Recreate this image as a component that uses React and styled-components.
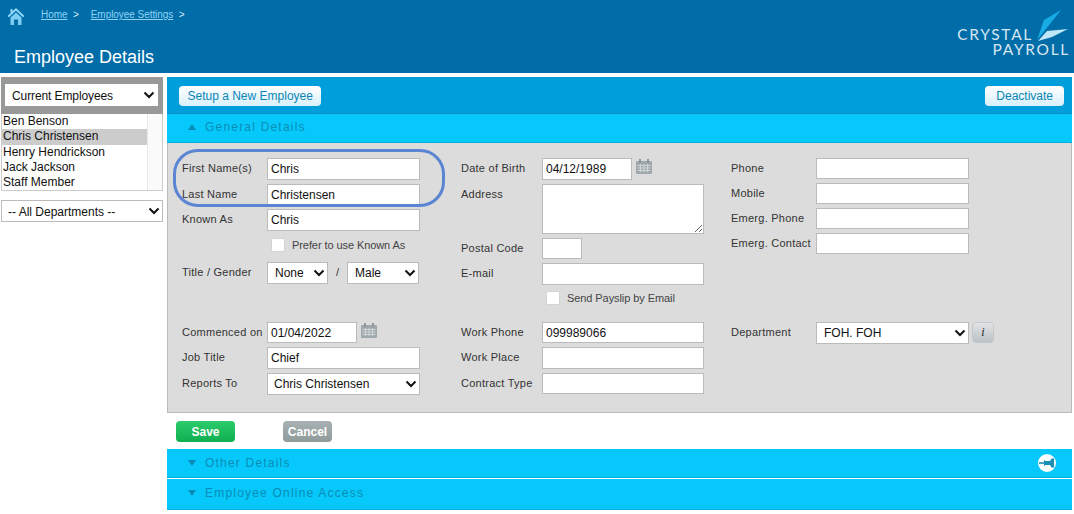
import styled, { createGlobalStyle } from 'styled-components'

const GlobalStyle = createGlobalStyle`
  html, body {
    margin: 0;
    padding: 0;
    background: #fff;
    font-family: "Liberation Sans", Arial, sans-serif;
  }
  * {
    box-sizing: border-box;
  }
`

const Page = styled.div`
  width: 1074px;
  height: 514px;
  overflow: hidden;
`

const Header = styled.header`
  display: flex;
  justify-content: space-between;
  height: 73px;
  background: #006ca8;
`

const HeaderLeft = styled.div`
  display: flex;
  flex-direction: column;
  justify-content: space-between;
  padding: 7px 0 5px 7px;
`

const Crumbs = styled.nav`
  display: flex;
  align-items: flex-start;
  height: 20px;
`

const Crumb = styled.span`
  margin-left: ${props => props.first ? '16px' : '12px'};
  padding-top: 2px;
  font-size: 10px;
  line-height: 12px;
  letter-spacing: -0.05px;
  color: #d5ecf8;
  a {
    color: #8ed3f6;
    text-decoration: underline;
  }
`

const PageTitle = styled.h1`
  margin: 0 0 0 7px;
  font-size: 18px;
  line-height: 22px;
  font-weight: normal;
  color: #fff;
`

const Logo = styled.div`
  position: relative;
  width: 118px;
  margin-right: 4px;
  padding-top: 27px;
  text-align: right;
  font-family: "Lato", "Liberation Sans", sans-serif;
  font-weight: 400;
  font-size: 15.5px;
  line-height: 14.5px;
  letter-spacing: 1.7px;
  color: #d6e6f0;
`

const LogoLine = styled.div`
  padding-right: ${props => props.pad || 0}px;
`

const LogoWing = styled.svg`
  position: absolute;
  top: 10px;
  right: 1px;
`

const Body = styled.div`
  display: flex;
  gap: 4px;
  padding: 4px 2px 0 1px;
`

const Sidebar = styled.aside`
  width: 162px;
  flex-shrink: 0;
`

const SidebarTop = styled.div`
  height: 37px;
  padding: 7px 4px 0;
  background: #999;
`

const EmployeeList = styled.div`
  display: flex;
  height: 77px;
  border: 1px solid #ccc;
  border-top: 0;
`

const ListRows = styled.ul`
  flex: 1;
  margin: 0;
  padding: 0;
  list-style: none;
`

const ListRow = styled.li`
  height: ${props => props.selected ? 16 : 15}px;
  padding: 0 1px;
  font-size: 12px;
  line-height: 15px;
  color: #111;
  background: ${props => props.selected ? '#ccc' : 'transparent'};
`

const ListScroll = styled.div`
  width: 15px;
  background: #fafafa;
  border-left: 1px solid #e8e8e8;
`

const DeptFilter = styled.div`
  margin-top: 9px;
`

const Main = styled.main`
  flex: 1;
  min-width: 0;
`

const Toolbar = styled.div`
  display: flex;
  justify-content: space-between;
  height: 37px;
  padding: 9px 8px 0 12px;
  background: #009fdb;
  border-bottom: 1px solid #0a8fc4;
`

const LightButton = styled.button`
  height: 20px;
  padding: 0 ${props => props.pad || 8.5}px;
  border: 0;
  border-radius: 4px;
  background: linear-gradient(#fff, #d8f0fb);
  color: #0a86b5;
  font-family: inherit;
  font-size: 12px;
`

const SectionBar = styled.div`
  position: relative;
  display: flex;
  align-items: center;
  gap: 9px;
  height: ${props => props.height || 29}px;
  padding-left: 21px;
  padding-bottom: ${props => props.lift || 0}px;
  margin-top: ${props => props.gap || 0}px;
  background: #06c8fb;
  border-bottom: 1px solid #08aee0;
  color: #0a8db5;
  font-size: 12px;
  letter-spacing: 1.2px;
`

const Arrow = styled.i`
  width: 0;
  height: 0;
  border-left: 4.5px solid transparent;
  border-right: 4.5px solid transparent;
  ${props => props.up
    ? 'border-bottom: 6px solid #0a8db5;'
    : 'border-top: 6px solid #0a8db5;'}
`

const PinBadge = styled.span`
  position: absolute;
  top: 5px;
  right: 16px;
  display: flex;
  align-items: center;
  justify-content: center;
  width: 18px;
  height: 18px;
  border-radius: 50%;
  background: #fff;
`

const FormPanel = styled.div`
  position: relative;
  height: 270px;
  padding: 15px 0 0 14px;
  background: #dcdcdc;
  border: 1px solid #bbb;
  border-top: 0;
`

const FormGrid = styled.div`
  display: grid;
  grid-template-columns: 279px 270px 1fr;
`

const LowerGrid = styled(FormGrid)`
  margin-top: ${props => props.gap}px;
`

const Column = styled.div`
  display: flex;
  flex-direction: column;
  gap: 4px;
`

const Field = styled.div`
  display: flex;
  align-items: flex-start;
  margin-top: ${props => props.top || 0}px;
`

const Label = styled.label`
  width: ${props => props.width || 85}px;
  flex-shrink: 0;
  padding-top: 3px;
  font-size: 11px;
  line-height: 14px;
  letter-spacing: 0.25px;
  color: #333;
`

const TextInput = styled.input`
  display: block;
  width: ${props => props.width || 153}px;
  height: ${props => props.height || 21.5}px;
  padding: 1px 3px 0;
  border: 1px solid #bbb;
  border-radius: 0;
  background: #fff;
  color: #111;
  font-family: inherit;
  font-size: 12px;
  outline: none;
`

const TextArea = styled.textarea`
  display: block;
  width: 162px;
  height: 50px;
  padding: 2px 3px;
  border: 1px solid #bbb;
  border-radius: 0;
  background: #fff;
  font-family: inherit;
  font-size: 12px;
  outline: none;
`

const SelectBox = styled.div`
  position: relative;
  width: ${props => props.width || 153}px;
`

const Select = styled.select`
  display: block;
  width: 100%;
  height: ${props => props.height || 22}px;
  padding: 1px 0 0 ${props => props.pad || 6}px;
  border: ${props => props.flat ? '0' : '1px solid #bbb'};
  border-radius: 0;
  background: #fff;
  color: #111;
  font-family: inherit;
  font-size: 12px;
  letter-spacing: ${props => props.flat ? '-0.1px' : '0'};
  appearance: none;
  outline: none;
`

const Chevron = styled.svg`
  position: absolute;
  top: 50%;
  right: 3px;
  margin-top: -4px;
  pointer-events: none;
`

const CheckRow = styled.div`
  display: flex;
  align-items: center;
  gap: 7px;
  height: 15px;
  margin: ${props => props.margin};
  font-size: 11px;
  letter-spacing: -0.08px;
  color: #444;
`

const CheckBox = styled.span`
  width: 14px;
  height: 14px;
  background: #fff;
  border: 1px solid #d4d4d4;
  border-radius: 2px;
`

const Slash = styled.span`
  width: 19px;
  padding-top: 4px;
  text-align: center;
  font-size: 11px;
  color: #333;
`

const CalendarIcon = styled.svg`
  margin: 1px 0 0 4px;
`

const InfoButton = styled.button`
  width: 22px;
  height: 21px;
  margin-left: 3px;
  padding: 0;
  border: 1px solid #c4c8cb;
  border-radius: 4px;
  background: linear-gradient(#e2e4e6, #bcc2c6);
  color: #222;
  font-family: "Liberation Serif", serif;
  font-style: italic;
  font-size: 12px;
`

const Highlight = styled.div`
  position: absolute;
  top: 6px;
  left: 5px;
  width: 272px;
  height: 58px;
  border: 3px solid #5b84d2;
  border-radius: 25px;
  pointer-events: none;
`

const Actions = styled.div`
  display: flex;
  align-items: flex-start;
  gap: 48px;
  height: 36px;
  padding: 8px 0 0 9px;
`

const ActionButton = styled.button`
  width: ${props => props.width}px;
  height: 21px;
  padding: 0;
  border: 0;
  border-radius: 4px;
  background: ${props => props.save
    ? 'linear-gradient(#2ccb6c, #0fae50)'
    : 'linear-gradient(#a9b2b2, #8f9a9a)'};
  color: #fff;
  font-family: inherit;
  font-size: 12px;
  font-weight: bold;
`

function Caret() {
  return (
    <Chevron width="12" height="8" viewBox="0 0 12 8">
      <path d="M1.5 1.5 L6 6 L10.5 1.5" fill="none" stroke="#111" strokeWidth="2" />
    </Chevron>
  )
}

function Dropdown({ value, width, height, pad, flat }) {
  return (
    <SelectBox width={width}>
      <Select defaultValue={value} height={height} pad={pad} flat={flat}>
        <option>{value}</option>
      </Select>
      <Caret />
    </SelectBox>
  )
}

function Calendar() {
  return (
    <CalendarIcon width="16" height="15" viewBox="0 0 16 15">
      <rect x="0" y="2" width="16" height="13" rx="1" fill="#9fa9ac" />
      <rect x="3" y="0" width="2" height="4" fill="#8f999c" />
      <rect x="11" y="0" width="2" height="4" fill="#8f999c" />
      <path d="M1.5 6.5h13M1.5 9h13M1.5 11.5h13M4.5 5v8M8 5v8M11.5 5v8" stroke="#d0d6d7" strokeWidth="1" />
    </CalendarIcon>
  )
}

function App() {
  const employees = ['Ben Benson', 'Chris Christensen', 'Henry Hendrickson', 'Jack Jackson', 'Staff Member']

  return (
    <Page>
      <GlobalStyle />
      <Header>
        <HeaderLeft>
          <Crumbs>
            <svg width="18" height="18" viewBox="0 0 18 18">
              <path d="M9 1 L17.5 9 L16 10.2 L9 3.8 L2 10.2 L0.5 9 L3.5 6.2 V2 H5.5 V4.3 Z" fill="#8fd6f8" />
              <path d="M3.5 10.5 L9 5.5 L14.5 10.5 V18 H11 V12.5 H7 V18 H3.5 Z" fill="#7fcdf5" />
            </svg>
            <Crumb first><a href="#home">Home</a> &nbsp;&gt;</Crumb>
            <Crumb><a href="#settings">Employee Settings</a> &nbsp;&gt;</Crumb>
          </Crumbs>
          <PageTitle>Employee Details</PageTitle>
        </HeaderLeft>
        <Logo>
          <LogoLine pad={37}>CRYSTAL</LogoLine>
          <LogoLine>PAYROLL</LogoLine>
          <LogoWing width="32" height="32" viewBox="0 0 32 32">
            <path d="M24 0 L7 10 L0 30 L9 19 Z" fill="#18ace6" />
            <path d="M31 19 L10 21 L1 31 L15 27 Z" fill="#bfe6f7" />
          </LogoWing>
        </Logo>
      </Header>

      <Body>
        <Sidebar>
          <SidebarTop>
            <Dropdown value="Current Employees" width={153} height={22} pad={7} flat />
          </SidebarTop>
          <EmployeeList>
            <ListRows>
              {employees.map((name, i) => (
                <ListRow key={name} selected={i === 1}>{name}</ListRow>
              ))}
            </ListRows>
            <ListScroll />
          </EmployeeList>
          <DeptFilter>
            <Dropdown value="-- All Departments --" width={162} height={22} pad={6} />
          </DeptFilter>
        </Sidebar>

        <Main>
          <Toolbar>
            <LightButton>Setup a New Employee</LightButton>
            <LightButton pad={11}>Deactivate</LightButton>
          </Toolbar>
          <SectionBar lift={2}>
            <Arrow up />
            General Details
          </SectionBar>
          <FormPanel>
            <Highlight />
            <FormGrid>
              <Column>
                <Field><Label>First Name(s)</Label><TextInput defaultValue="Chris" /></Field>
                <Field><Label>Last Name</Label><TextInput defaultValue="Christensen" /></Field>
                <Field><Label>Known As</Label><TextInput defaultValue="Chris" /></Field>
                <CheckRow margin="3px 0 0 89px"><CheckBox />Prefer to use Known As</CheckRow>
                <Field top={5}>
                  <Label>Title / Gender</Label>
                  <Dropdown value="None" width={61} pad={7} />
                  <Slash>/</Slash>
                  <Dropdown value="Male" width={72} pad={7} />
                </Field>
              </Column>
              <Column>
                <Field><Label width={81}>Date of Birth</Label><TextInput width={90} defaultValue="04/12/1989" /><Calendar /></Field>
                <Field><Label width={81}>Address</Label><TextArea /></Field>
                <Field><Label width={81}>Postal Code</Label><TextInput width={40} /></Field>
                <Field><Label width={81}>E-mail</Label><TextInput width={162} /></Field>
                <CheckRow margin="2px 0 0 85px"><CheckBox />Send Payslip by Email</CheckRow>
              </Column>
              <Column>
                <Field><Label>Phone</Label><TextInput height={21} /></Field>
                <Field><Label>Mobile</Label><TextInput height={21} /></Field>
                <Field><Label>Emerg. Phone</Label><TextInput height={21} /></Field>
                <Field><Label>Emerg. Contact</Label><TextInput height={21} /></Field>
              </Column>
            </FormGrid>
            <LowerGrid gap={16}>
              <Column>
                <Field><Label>Commenced on</Label><TextInput width={90} defaultValue="01/04/2022" /><Calendar /></Field>
                <Field><Label>Job Title</Label><TextInput defaultValue="Chief" /></Field>
                <Field><Label>Reports To</Label><Dropdown value="Chris Christensen" /></Field>
              </Column>
              <Column>
                <Field><Label width={81}>Work Phone</Label><TextInput width={162} defaultValue="099989066" /></Field>
                <Field><Label width={81}>Work Place</Label><TextInput width={162} /></Field>
                <Field><Label width={81}>Contract Type</Label><TextInput width={162} /></Field>
              </Column>
              <Column>
                <Field>
                  <Label>Department</Label>
                  <Dropdown value="FOH. FOH" pad={7} />
                  <InfoButton>i</InfoButton>
                </Field>
              </Column>
            </LowerGrid>
          </FormPanel>
          <Actions>
            <ActionButton save width={59}>Save</ActionButton>
            <ActionButton width={49}>Cancel</ActionButton>
          </Actions>
          <SectionBar>
            <Arrow />
            Other Details
            <PinBadge>
              <svg width="16" height="12" viewBox="0 0 16 12">
                <path d="M0 5.2 H5 V6.8 H0 Z" fill="#1a8fb5" />
                <path d="M5 3 L6.5 4 H11 L12.5 1.5 H15 V10.5 H12.5 L11 8 H6.5 L5 9 Z" fill="#1a8fb5" />
              </svg>
            </PinBadge>
          </SectionBar>
          <SectionBar height={31} gap={1} lift={2}>
            <Arrow />
            Employee Online Access
          </SectionBar>
        </Main>
      </Body>
    </Page>
  )
}

export default App
